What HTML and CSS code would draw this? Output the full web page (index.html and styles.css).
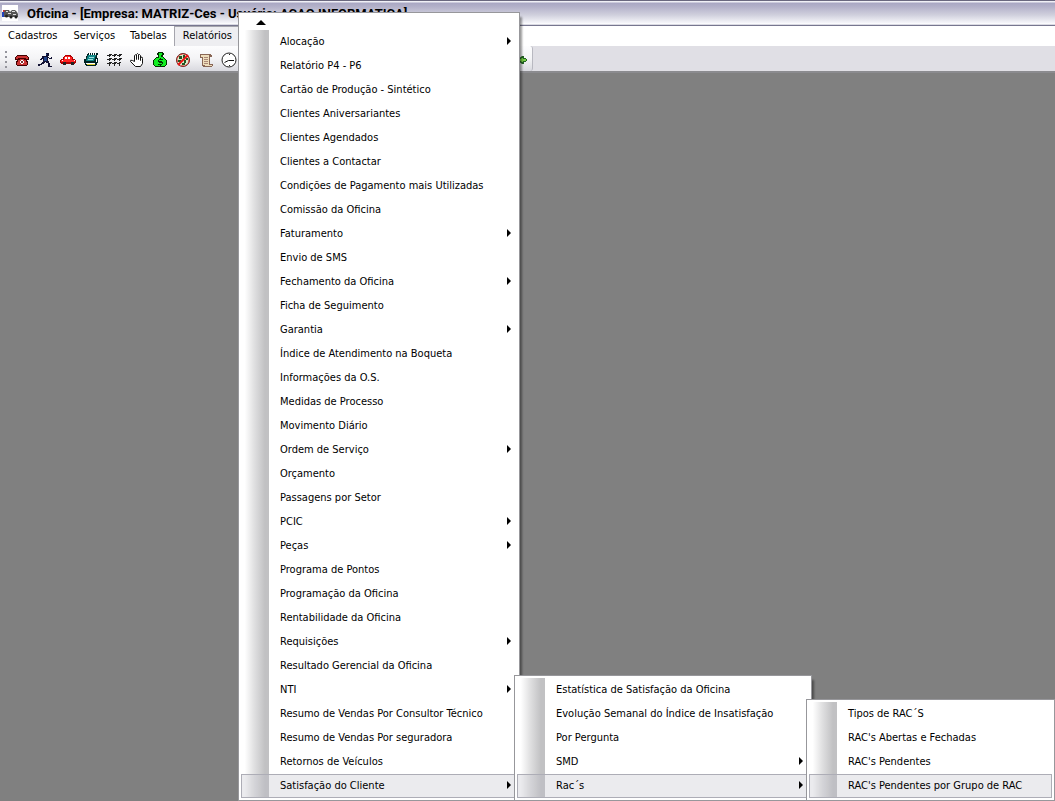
FILE: index.html
```html
<!DOCTYPE html>
<html lang="pt-BR">
<head>
<meta charset="utf-8">
<title>Oficina</title>
<link rel="stylesheet" href="styles.css">
</head>
<body>
<div class="window">
  <header class="titlebar">
    <svg class="app-icon" viewBox="0 0 16 16" aria-hidden="true"><path fill="#fff" d="M0 0h16v16H0z"/><path fill="#c33" d="M1 5h2v3H1z"/><path fill="#24b" d="M0 7h2v5H0z"/><path fill="#555" d="M2 7l1-2h4l1 2 2-2h3l2 2 1 2v3H2z"/><path fill="#ddd" d="M4 6h2v1H4zM10 6h3v1h-3zM6 8h3v1H6zM11 9h3v1h-3z"/><circle cx="4.500" cy="11" r="1.500" fill="#222"/><circle cx="9" cy="12" r="1.500" fill="#222"/><circle cx="14" cy="12" r="1.500" fill="#222"/></svg>
    <h1 class="title">Oficina - [Empresa: MATRIZ-Ces - Usuário: ACAO INFORMATICA]</h1>
  </header>
  <nav class="menubar">
    <button class="menubar-item">Cadastros</button>
    <button class="menubar-item">Serviços</button>
    <button class="menubar-item">Tabelas</button>
    <button class="menubar-item menubar-open">Relatórios</button>
  </nav>
  <div class="toolbar">
    <div class="tools">
      <span class="grip"></span>
      <button class="tool" aria-label="Telefone"><svg viewBox="0 0 16 16"><path fill="#400" d="M3 3h10v1h1v1h1v3h-2v1h1v4h-1v1H3v-1H2V9h1V8H1V5h1V4h1z"/><path fill="#c33" d="M3 4h10v1h1v2h-2V6H4v1H2V5h1zM6 7h4v1h2v2h1v3H3v-3h1V8h2z"/><path fill="#fff" d="M7 8h2v1h1v2H9v1H7v-1H6V9h1z"/><path fill="#733" d="M7 9h2v2H7z"/></svg></button>
      <button class="tool" aria-label="Corredor"><svg viewBox="0 0 16 16"><path fill="#113" d="M9 1h3v3H9zM5 4h6v1h1v1h2V5h1v2h-3V6h-1v3h1v2h1v3h2v1h-4v-4H9v-1H8v1H7v1H5v1H3v1H1v-2h3v-1h1v-1h1V7H5v1H3V7h1V6h1z"/><path fill="#248" d="M7 5h3v4H7zM9 2h1v1H9z"/></svg></button>
      <button class="tool" aria-label="Veículo"><svg viewBox="0 0 16 16"><path fill="#a00" d="M5 3h6v1h1v1h1v2h2v1h1v3h-1v1H1v-1H0V8h1V7h2V5h1V4h1z"/><path fill="#f22" d="M5 4h5v1h2v3h3v2H1V8h3V5h1z"/><path fill="#fff" d="M5 5h2v2H5zM8 5h2v2H8zM2 8h1v1H2zM14 8h1v1h-1z"/><path fill="#222" d="M3 10h3v3H3zM11 10h3v3h-3z"/></svg></button>
      <button class="tool" aria-label="Agenda"><svg viewBox="0 0 16 16"><path fill="#022" d="M5 1h10v2h-1v3h1v5h-1v2h-1v1H3v-1H2v-2H1V7h2V4h1V2h1z"/><path fill="#188" d="M5 3h8l-2 6H3z"/><path fill="#fff" d="M6 1h1v2H6zM8 1h1v2H8zM10 1h1v2h-1zM12 1h1v2h-1zM3 11h9v1H3zM13 7h1v3h-1z"/><path fill="#9dd" d="M6 5h5v1H6zM5 7h5v1H5z"/><path fill="#dc3" d="M4 12h8v1H4z"/></svg></button>
      <button class="tool" aria-label="Grade"><svg viewBox="0 0 16 16"><path fill="#222" d="M3 2h3v1H5v1H4v1H3V4H1V3h2zM8 2h3v1h-1v1H9v1H8V4H6V3h2zM13 2h3v1h-1v1h-1v1h-1V4h-2V3h2zM3 6h3v1H5v1H4v1H3V8H1V7h2zM8 6h3v1h-1v1H9v1H8V8H6V7h2zM13 6h3v1h-1v1h-1v1h-1V8h-2V7h2zM3 10h3v1H5v1H4v2H3v-2H1v-1h2zM8 10h3v1h-1v1H9v2H8v-2H6v-1h2zM13 10h2v1h-1v3h-1v-2h-2v-1h2z"/></svg></button>
      <button class="tool" aria-label="Parar"><svg viewBox="0 0 16 16"><path class="line" fill="#fff" d="M5.500 9.500V3.500Q6.500 2 7.500 3.500V7.500V2.500Q8.500 .5 9.500 2.500V7.500V3.500Q10.500 1.500 11.500 3.500V8.500V5.500Q13.500 4 13.500 6.500V11.500L11.500 14.500H6.500L1.500 9.500Q1 7.500 3.500 8.500z"/></svg></button>
      <button class="tool" aria-label="Financeiro"><svg viewBox="0 0 16 16"><path fill="#030" d="M6 0h5v1h1v2h-1v2h1v1h1v1h1v1h1v5h-1v1h-1v1H3v-1H2v-1H1V8h1V7h1V6h1V5h2V3H5V1h1z"/><path fill="#1e2" d="M7 1h3v2H9v2h2v1h1v1h1v1h1v5h-1v1H3v-1H2V8h1V7h1V6h3z"/><path fill="#030" d="M8 6h1v1h2v1H7v1h3v1h1v2h-1v1H9v1H8v-1H6v-1h4v-1H7v-1H6V8h1V7h1z"/></svg></button>
      <button class="tool" aria-label="Cancelar"><svg viewBox="0 0 16 16"><circle cx="8" cy="8" r="6.500" fill="#dec" stroke="#522"/><path fill="#252" d="M4 4h3v3H4zM8 3h2v3H8zM11 6h2v2h-2zM9 8h2v3H9zM3 8h3v2H3zM7 11h3v2H7z"/><circle cx="8" cy="8" r="6" fill="none" stroke="#d22" stroke-dasharray="3 1"/><path d="M3 13L13 3" stroke="#e11" stroke-width="2"/></svg></button>
      <button class="tool" aria-label="Documento"><svg viewBox="0 0 16 16"><path fill="#865" d="M2 2h11v1h1v2h-2v7h3v2h-1v1H5v-1H4V6H2z"/><path fill="#edb" d="M3 3h8v10H5V5H3zM7 13h7v1H7z"/><path fill="#a87" d="M6 5h4v1H6zM6 7h4v1H6zM6 9h4v1H6zM6 11h4v1H6z"/></svg></button>
      <button class="tool" aria-label="Relógio"><svg viewBox="0 0 16 16"><circle cx="8" cy="8" r="7" fill="#fff" stroke="#222"/><path class="line" d="M3.500 10.500L7.500 8.500H13"/><path fill="#222" d="M8 2h1v1H8zM8 13h1v1H8z"/></svg></button>
      <button class="tool tool-last" aria-label="Voltar"><svg viewBox="0 0 16 16"><path fill="#262" d="M5 8l5-4h2v2h2v1h1v2h-1v1h-2v2h-2z"/><path fill="#7c4" d="M7 8l3-2h1v1h3v2h-3v1h-1z"/></svg></button>
    </div>
  </div>
  <main class="workspace"></main>

  <div class="popup popup-main">
    <button class="scroll-up" aria-label="Rolar para cima"><svg viewBox="0 0 10 5"><path d="M5 0L10 5H0z"/></svg></button>
    <ul class="menu">
      <li><button class="item more">Alocação</button></li>
      <li><button class="item">Relatório P4 - P6</button></li>
      <li><button class="item">Cartão de Produção - Sintético</button></li>
      <li><button class="item">Clientes Aniversariantes</button></li>
      <li><button class="item">Clientes Agendados</button></li>
      <li><button class="item">Clientes a Contactar</button></li>
      <li><button class="item">Condições de Pagamento mais Utilizadas</button></li>
      <li><button class="item">Comissão da Oficina</button></li>
      <li><button class="item more">Faturamento</button></li>
      <li><button class="item">Envio de SMS</button></li>
      <li><button class="item more">Fechamento da Oficina</button></li>
      <li><button class="item">Ficha de Seguimento</button></li>
      <li><button class="item more">Garantia</button></li>
      <li><button class="item">Índice de Atendimento na Boqueta</button></li>
      <li><button class="item">Informações da O.S.</button></li>
      <li><button class="item">Medidas de Processo</button></li>
      <li><button class="item">Movimento Diário</button></li>
      <li><button class="item more">Ordem de Serviço</button></li>
      <li><button class="item">Orçamento</button></li>
      <li><button class="item">Passagens por Setor</button></li>
      <li><button class="item more">PCIC</button></li>
      <li><button class="item more">Peças</button></li>
      <li><button class="item">Programa de Pontos</button></li>
      <li><button class="item">Programação da Oficina</button></li>
      <li><button class="item">Rentabilidade da Oficina</button></li>
      <li><button class="item more">Requisições</button></li>
      <li><button class="item">Resultado Gerencial da Oficina</button></li>
      <li><button class="item more">NTI</button></li>
      <li><button class="item">Resumo de Vendas Por Consultor Técnico</button></li>
      <li><button class="item">Resumo de Vendas Por seguradora</button></li>
      <li><button class="item">Retornos de Veículos</button></li>
      <li class="branch"><button class="item more active">Satisfação do Cliente</button>
        <div class="popup submenu submenu-satisfaction">
          <ul class="menu">
            <li><button class="item">Estatística de Satisfação da Oficina</button></li>
            <li><button class="item">Evolução Semanal do Índice de Insatisfação</button></li>
            <li><button class="item">Por Pergunta</button></li>
            <li><button class="item more">SMD</button></li>
            <li class="branch"><button class="item more active">Rac´s</button>
              <div class="popup submenu submenu-rac">
                <ul class="menu">
                  <li><button class="item">Tipos de RAC´S</button></li>
                  <li><button class="item">RAC's Abertas e Fechadas</button></li>
                  <li><button class="item">RAC's Pendentes</button></li>
                  <li><button class="item active">RAC's Pendentes por Grupo de RAC</button></li>
                </ul>
              </div>
            </li>
          </ul>
        </div>
      </li>
    </ul>
  </div>
</div>
</body>
</html>
```
FILE: styles.css
```css
* { box-sizing: border-box; }
body {
  margin: 0;
  overflow: hidden;
  font: 11px/14px "DejaVu Sans Condensed", Tahoma, sans-serif;
  color: #000;
}
button {
  font: inherit;
  color: inherit;
  background: none;
  border: 1px solid transparent;
  padding: 0;
  margin: 0;
  text-align: left;
  white-space: nowrap;
}
svg { display: block; }
.window {
  position: relative;
  display: flex;
  flex-direction: column;
  height: 100vh;
  overflow: hidden;
}
.titlebar {
  display: flex;
  align-items: center;
  gap: 9px;
  height: 26px;
  padding: 0 2px;
  border-top: 1px solid #6a687f;
  border-bottom: 1px solid #77768f;
  background: linear-gradient(#f0f0f6 0, #f0f0f6 1px, #a9a7c3 2px, #b4b2ca 6px, #d0d0dd 14px, #f6f6fa 22px, #fff 23px, #b4b4c6 24px);
}
.app-icon { width: 16px; height: 16px; }
.title {
  margin: 0;
  padding-top: 2px;
  font: bold 13px/16px Roboto, "Trebuchet MS", sans-serif;
  white-space: nowrap;
}
.menubar {
  display: flex;
  height: 20px;
  background: #fff;
}
.menubar-item { padding: 0 7px 1px; }
.menubar-item + .menubar-item { padding-right: 6px; }
.menubar-open {
  flex: 0 0 66px;
  padding-left: 8px;
  border-color: #a5a5ad;
  border-bottom: 0;
  background: #eeeef1;
}
.toolbar {
  display: flex;
  height: 27px;
  border-bottom: 2px solid #8b8b8f;
  background: #e0dfe5;
}
.tools {
  display: flex;
  align-items: center;
  width: 533px;
  padding: 2px 0 0 5px;
  border-right: 1px solid #b8b8c0;
  border-radius: 0 3px 3px 0;
  background: linear-gradient(#fdfdfe, #f4f4f6 50%, #d9d9df);
}
.grip {
  width: 2px;
  height: 17px;
  margin-right: 4px;
  background: repeating-linear-gradient(#94949c 0, #94949c 2px, transparent 2px, transparent 5px);
}
.tool {
  width: 23px;
  height: 23px;
  padding: 3px 2px;
}
.tool svg { width: 16px; height: 16px; }
.line { fill: none; stroke: #111; }
.line[fill="#fff"] { fill: #fff; }
.tool-last { margin-left: auto; }
.workspace { flex: 1; background: #808080; }
.popup {
  position: absolute;
  padding: 2px;
  border: 1px solid #97979b;
  background: #fff;
  box-shadow: 3px 4px 2px -1px rgba(0, 0, 0, 0.4);
}
.popup-main { left: 238px; top: 12px; width: 282px; }
.scroll-up { display: block; width: 100%; height: 15px; padding: 4px 14px; }
.scroll-up svg { width: 10px; height: 5px; }
.menu {
  list-style: none;
  margin: 0;
  padding: 0;
  background: linear-gradient(90deg, #fff 10%, #e0e0e1 45%, #c1c1c3 85%) 1px 0 / 27px 100% no-repeat;
}
.item {
  display: flex;
  align-items: center;
  justify-content: space-between;
  width: 100%;
  height: 24px;
  padding: 0 5px 0 38px;
}
.more::after {
  content: "";
  margin-bottom: 2px;
  border-left: 4px solid #000;
  border-top: 4px solid transparent;
  border-bottom: 4px solid transparent;
}
.active {
  border-color: #adadb6;
  background: rgba(190, 190, 200, 0.3);
}
.branch { position: relative; }
.submenu { left: calc(100% - 3px); bottom: -3px; }
.submenu-satisfaction { width: 298px; }
.submenu-rac { width: 249px; }
```
